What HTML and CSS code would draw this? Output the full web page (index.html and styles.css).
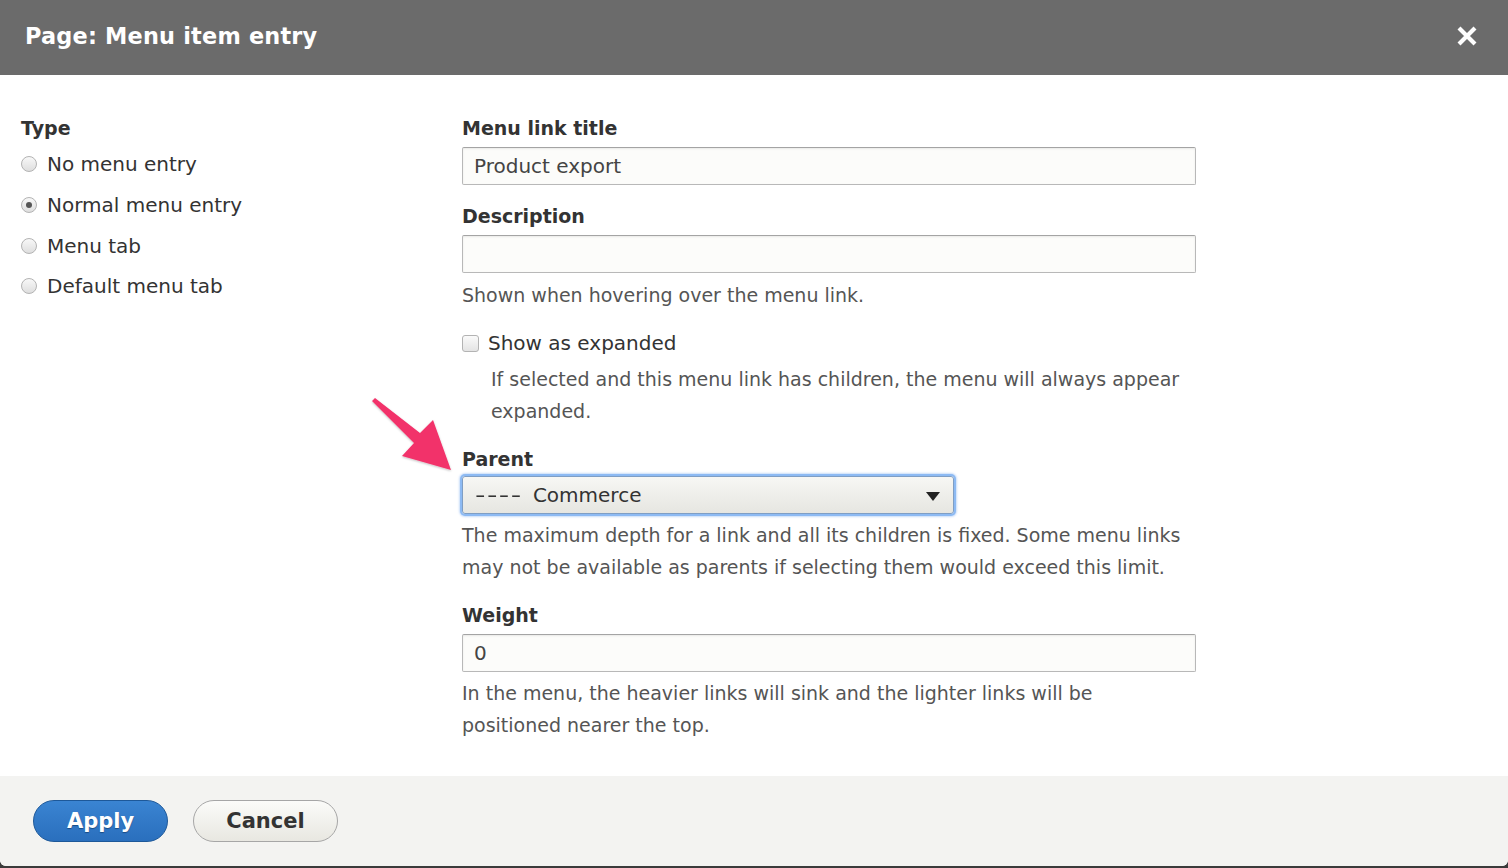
FILE: index.html
```html
<!DOCTYPE html>
<html>
<head>
<meta charset="utf-8">
<link rel="stylesheet" href="styles.css">
</head>
<body>
<div class="dialog">
  <header class="titlebar">
    <h1 class="title">Page: Menu item entry</h1>
    <button class="close" aria-label="Close">
      <svg width="22" height="22" viewBox="0 0 22 22"><path d="M3 3 L19 19 M19 3 L3 19" stroke="#fff" stroke-width="4.2" stroke-linecap="butt"/></svg>
    </button>
  </header>
  <main class="content">
    <section class="left">
      <div class="label">Type</div>
      <div class="radios">
        <label class="radio-row"><span class="radio"></span>No menu entry</label>
        <label class="radio-row"><span class="radio checked"></span>Normal menu entry</label>
        <label class="radio-row"><span class="radio"></span>Menu tab</label>
        <label class="radio-row"><span class="radio"></span>Default menu tab</label>
      </div>
    </section>
    <section class="right">
      <div class="field">
        <div class="label">Menu link title</div>
        <div class="input">Product export</div>
      </div>
      <div class="field f-desc">
        <div class="label">Description</div>
        <div class="input"></div>
        <div class="help">Shown when hovering over the menu link.</div>
      </div>
      <div class="field f-check">
        <label class="check-row"><span class="checkbox"></span>Show as expanded</label>
        <div class="help indent">If selected and this menu link has children, the menu will always appear expanded.</div>
      </div>
      <div class="field f-parent">
        <div class="label">Parent</div>
        <div class="select"><span><span class="dashes">----</span>Commerce</span><span class="caret"></span></div>
        <div class="help">The maximum depth for a link and all its children is fixed. Some menu links may not be available as parents if selecting them would exceed this limit.</div>
      </div>
      <div class="field f-weight">
        <div class="label">Weight</div>
        <div class="input">0</div>
        <div class="help">In the menu, the heavier links will sink and the lighter links will be positioned nearer the top.</div>
      </div>
    </section>
    <svg class="arrow" width="100" height="90" viewBox="0 0 100 90">
      <defs>
        <filter id="sh" x="-20%" y="-20%" width="140%" height="140%">
          <feDropShadow dx="0" dy="1" stdDeviation="1.2" flood-color="#000" flood-opacity="0.25"/>
        </filter>
      </defs>
      <path filter="url(#sh)" fill="#f2326b" d="M12 11 L15 8 L60 43 L73 30 L91 80 L42 66 L54 53 Z"/>
    </svg>
  </main>
  <footer class="actions">
    <button class="btn primary">Apply</button>
    <button class="btn">Cancel</button>
  </footer>
</div>
</body>
</html>
```

FILE: styles.css
```css
* { box-sizing: border-box; }
html { background: #3a3a3a; }
body {
  margin: 0;
  font-family: "DejaVu Sans", Verdana, sans-serif;
  color: #333;
}
.dialog {
  width: 1508px;
  height: 866px;
  background: #fff;
  display: flex;
  flex-direction: column;
  border-radius: 0 0 6px 6px;
  overflow: hidden;
}
.titlebar {
  height: 75px;
  background: #6b6b6b;
  display: flex;
  align-items: center;
  justify-content: space-between;
  padding: 0 30px 4px 25px;
  flex: none;
}
.title {
  margin: 0;
  color: #fff;
  font-size: 22.4px;
  font-weight: bold;
  letter-spacing: 0.2px;
}
.close {
  background: none;
  border: 0;
  padding: 0;
  width: 22px;
  height: 22px;
  display: flex;
}
.content {
  flex: 1;
  position: relative;
  display: flex;
  padding: 41px 0 0 21px;
}
.left { width: 441px; flex: none; }
.right { width: 734px; flex: none; }
.label {
  font-size: 19px;
  font-weight: bold;
  line-height: 24px;
  color: #333;
}
.radios { margin-top: 4px; }
.radio-row {
  display: flex;
  align-items: center;
  height: 40.7px;
  font-size: 20px;
  color: #333;
}
.radio {
  width: 16px;
  height: 16px;
  border-radius: 50%;
  border: 1px solid #b3b3b3;
  background: linear-gradient(#f8f8f8, #dedede);
  margin-right: 10px;
  position: relative;
  flex: none;
}
.radio.checked::after {
  content: "";
  position: absolute;
  left: 4px; top: 4px;
  width: 6px; height: 6px;
  border-radius: 50%;
  background: #555;
}
.input {
  margin-top: 7px;
  height: 38px;
  border: 1px solid #b8b8b8;
  border-top-color: #a4a4a4;
  border-radius: 2px;
  background: #fcfcfa;
  box-shadow: inset 0 1px 2px rgba(0,0,0,0.08);
  font-size: 20px;
  line-height: 36px;
  padding: 0 11px;
  color: #444;
}
.field + .field { margin-top: 19px; }
.help {
  font-size: 19px;
  line-height: 32px;
  color: #555;
  margin-top: 6px;
}
.f-check { margin-top: 16px !important; }
.check-row {
  display: flex;
  align-items: center;
  height: 32px;
  font-size: 20px;
  color: #333;
}
.checkbox {
  width: 17px;
  height: 17px;
  border: 1px solid #b3b3b3;
  border-radius: 3px;
  background: linear-gradient(#fafafa, #e4e4e4);
  margin-right: 9px;
  flex: none;
}
.help.indent { margin: 4px 0 0 29px; }
.f-parent { margin-top: 20px !important; }
.select {
  margin-top: 5px;
  width: 492px;
  height: 38px;
  border: 1px solid #7f9ec4;
  border-radius: 3px;
  background: linear-gradient(#f7f7f4, #e6e6e1);
  box-shadow: 0 0 0 2px #8dbaf3, 0 0 2px 3px rgba(120,170,240,0.4);
  display: flex;
  align-items: center;
  justify-content: space-between;
  padding: 0 13px 0 12px;
  font-size: 20px;
  color: #333;
}
.dashes {
  display: inline-block;
  letter-spacing: 1px;
  transform: scaleX(1.45);
  transform-origin: left center;
  margin-right: 25px;
}
.caret {
  width: 0; height: 0;
  border-left: 7px solid transparent;
  border-right: 7px solid transparent;
  border-top: 9px solid #222;
  margin-top: 2px;
}
.f-parent .help { margin-top: 5px; }
.f-weight { margin-top: 20px !important; }
.f-weight .help { margin-top: 5px; }
.arrow {
  position: absolute;
  left: 360px;
  top: 315px;
}
.actions {
  height: 90px;
  flex: none;
  background: #f3f3f1;
  display: flex;
  align-items: center;
  padding: 0 0 0 33px;
  gap: 25px;
}
.btn {
  font-family: "DejaVu Sans", Verdana, sans-serif;
  font-size: 21px;
  font-weight: bold;
  height: 42px;
  border-radius: 21px;
  border: 1px solid #a6a6a6;
  background: linear-gradient(#fbfbf9, #e8e7e1);
  color: #333;
  padding: 0;
  width: 145px;
}
.btn.primary {
  width: 135px;
  background: linear-gradient(#3a84d2, #2a6fbd);
  border-color: #1d5899;
  color: #fff;
  text-shadow: 0 1px 1px #1a4c85;
}
```
